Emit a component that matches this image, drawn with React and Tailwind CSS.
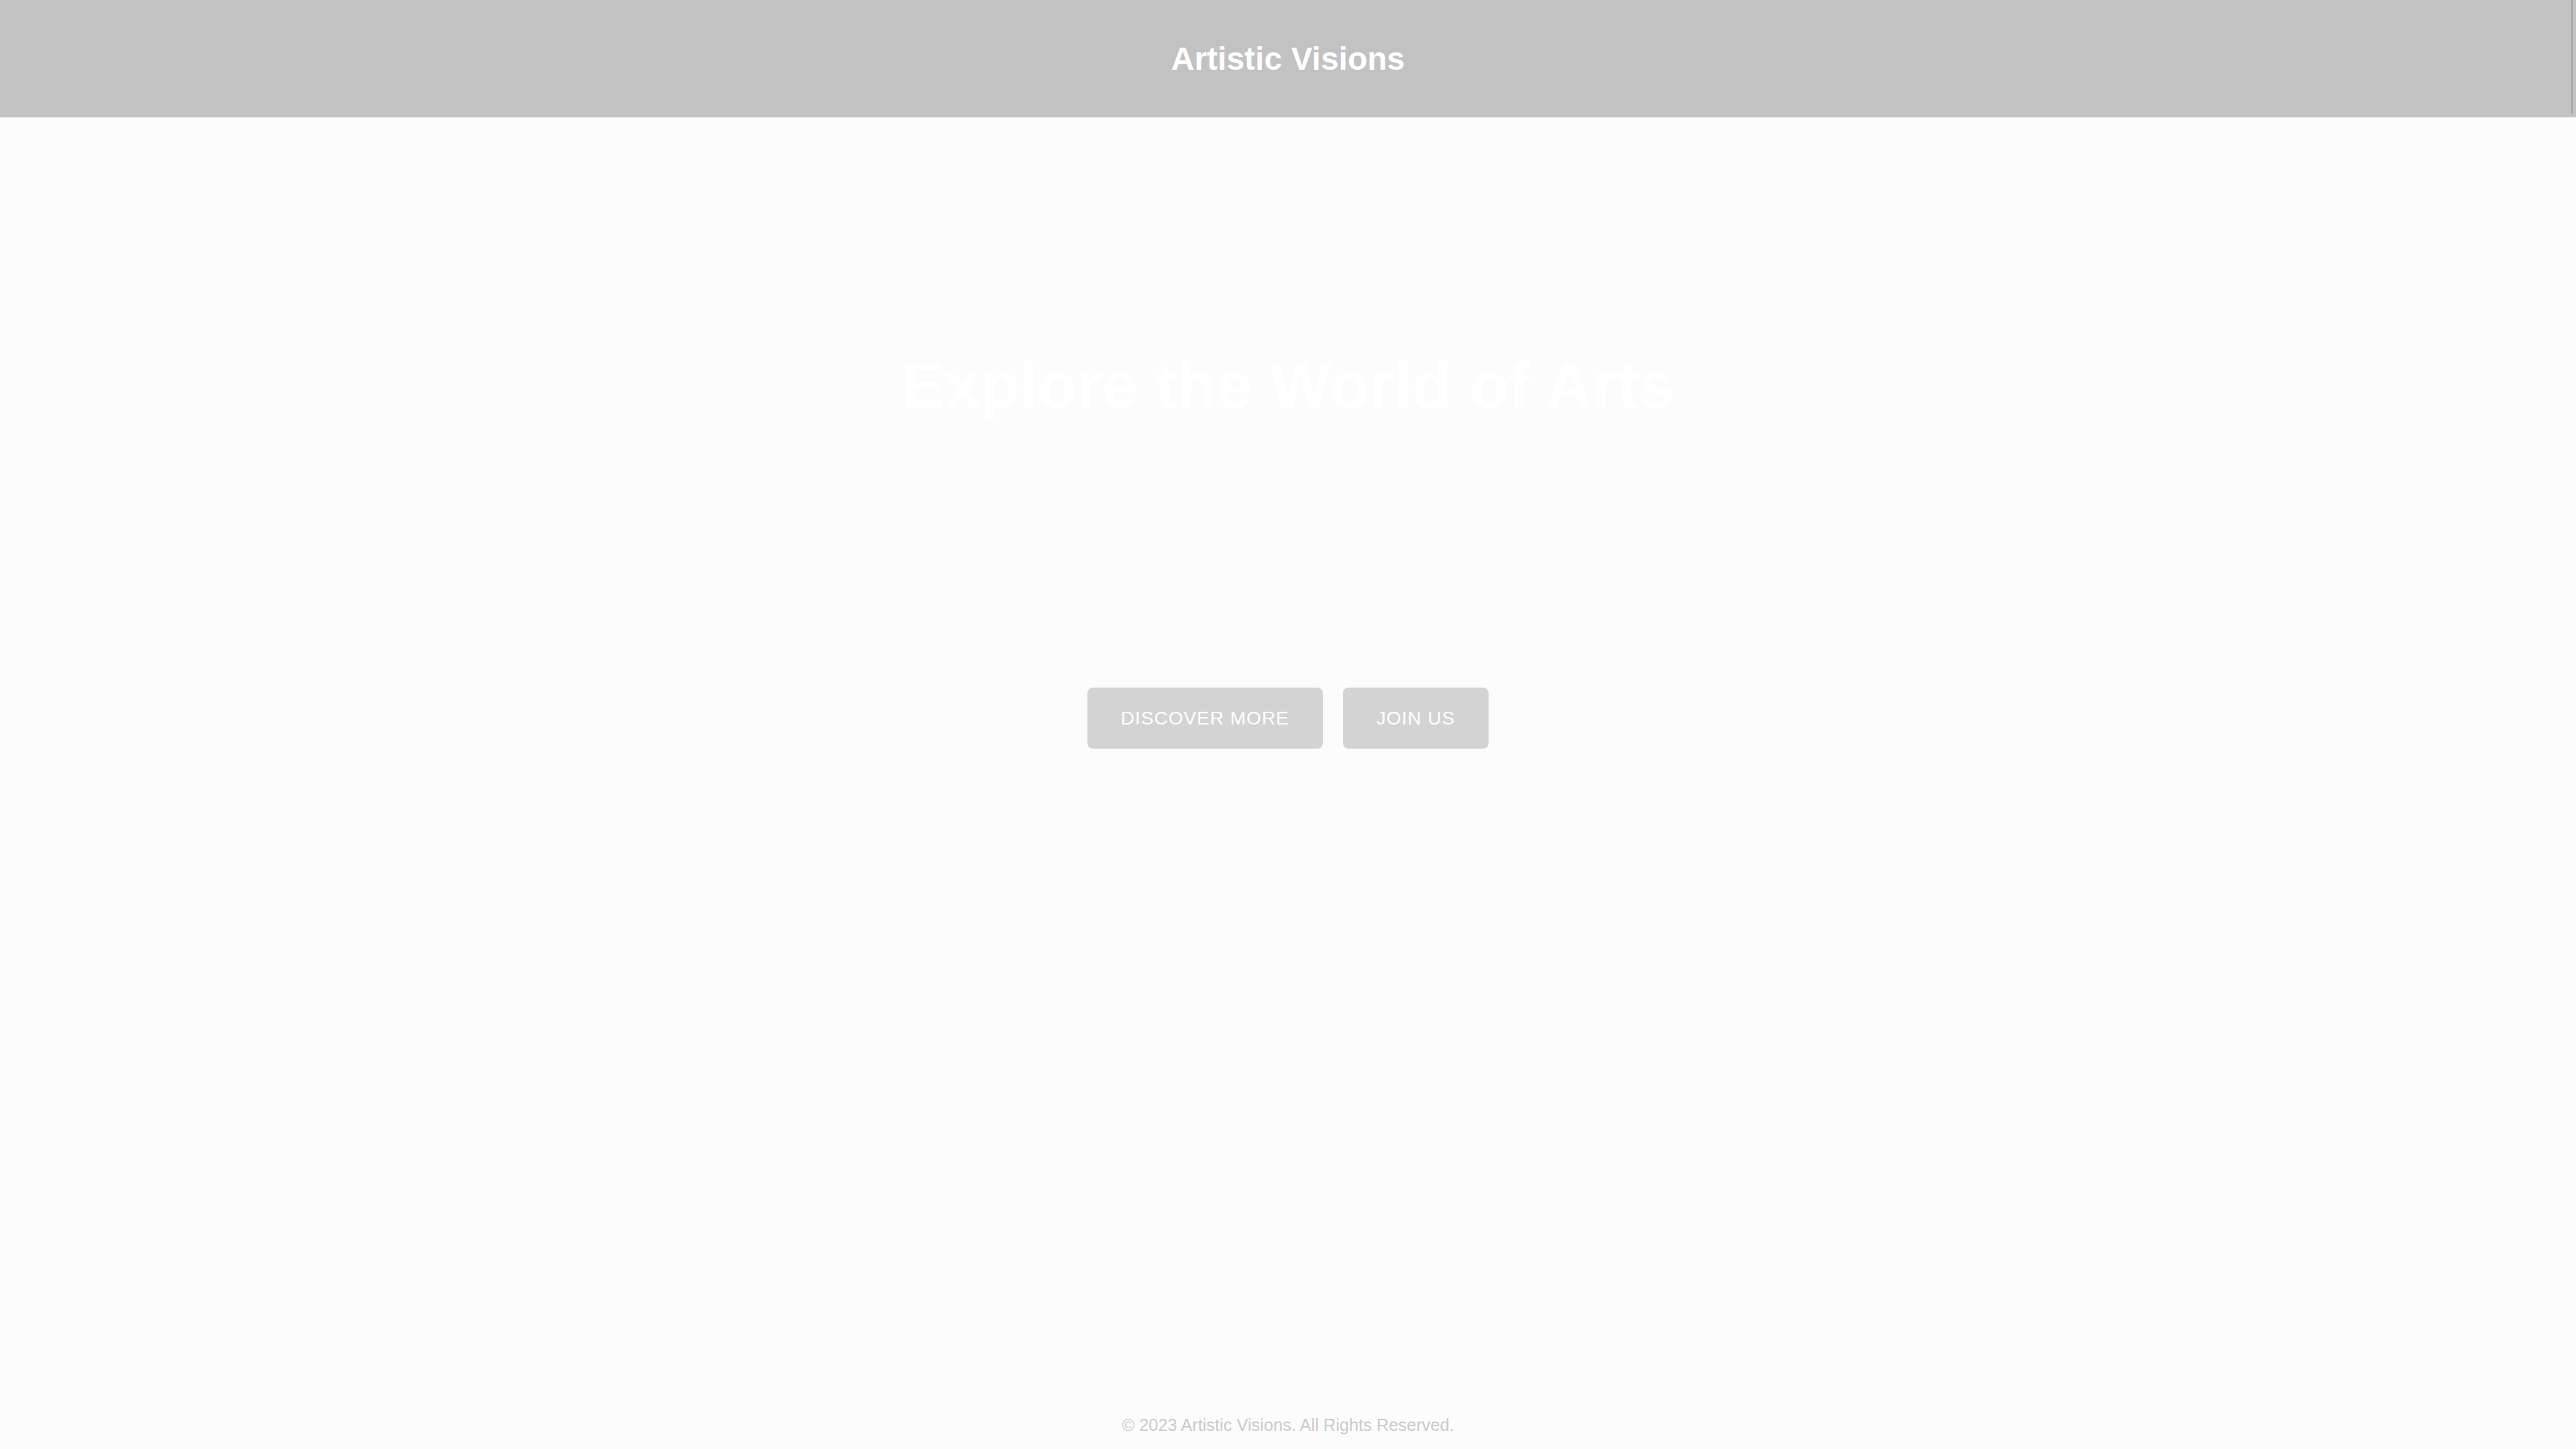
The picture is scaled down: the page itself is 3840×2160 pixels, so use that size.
import React from "react";

export default function App() {
  return (
    <div
      className="relative min-h-screen flex flex-col bg-[#fcfcfc]"
      style={{ fontFamily: '"Liberation Sans", Arial, sans-serif' }}
    >
      <header className="h-[175px] bg-[#c2c2c2] flex items-center justify-center">
        <h2 className="text-[48px] font-bold text-white leading-[55px]">Artistic Visions</h2>
      </header>
      <div className="absolute right-[5px] top-0 w-[2px] h-[170px] bg-[#a3a3a3]" />

      <main className="flex-1 flex flex-col items-center pt-[345px]">
        <h1 className="text-[96px] font-bold text-white leading-[110px]">Explore the World of Arts</h1>
        <div className="mt-[395px] flex gap-[30px]">
          <button className="h-[91px] px-[50px] rounded-[8px] bg-[#d3d3d3] text-white text-[28px] tracking-[1px] leading-[32px]">
            DISCOVER MORE
          </button>
          <button className="h-[91px] px-[50px] rounded-[8px] bg-[#d3d3d3] text-white text-[28px] tracking-[1px] leading-[32px]">
            JOIN US
          </button>
        </div>
      </main>

      <footer className="pb-[21px] flex justify-center">
        <p className="text-[25.4px] leading-[29px] text-[#cacaca]">© 2023 Artistic Visions. All Rights Reserved.</p>
      </footer>
    </div>
  );
}
